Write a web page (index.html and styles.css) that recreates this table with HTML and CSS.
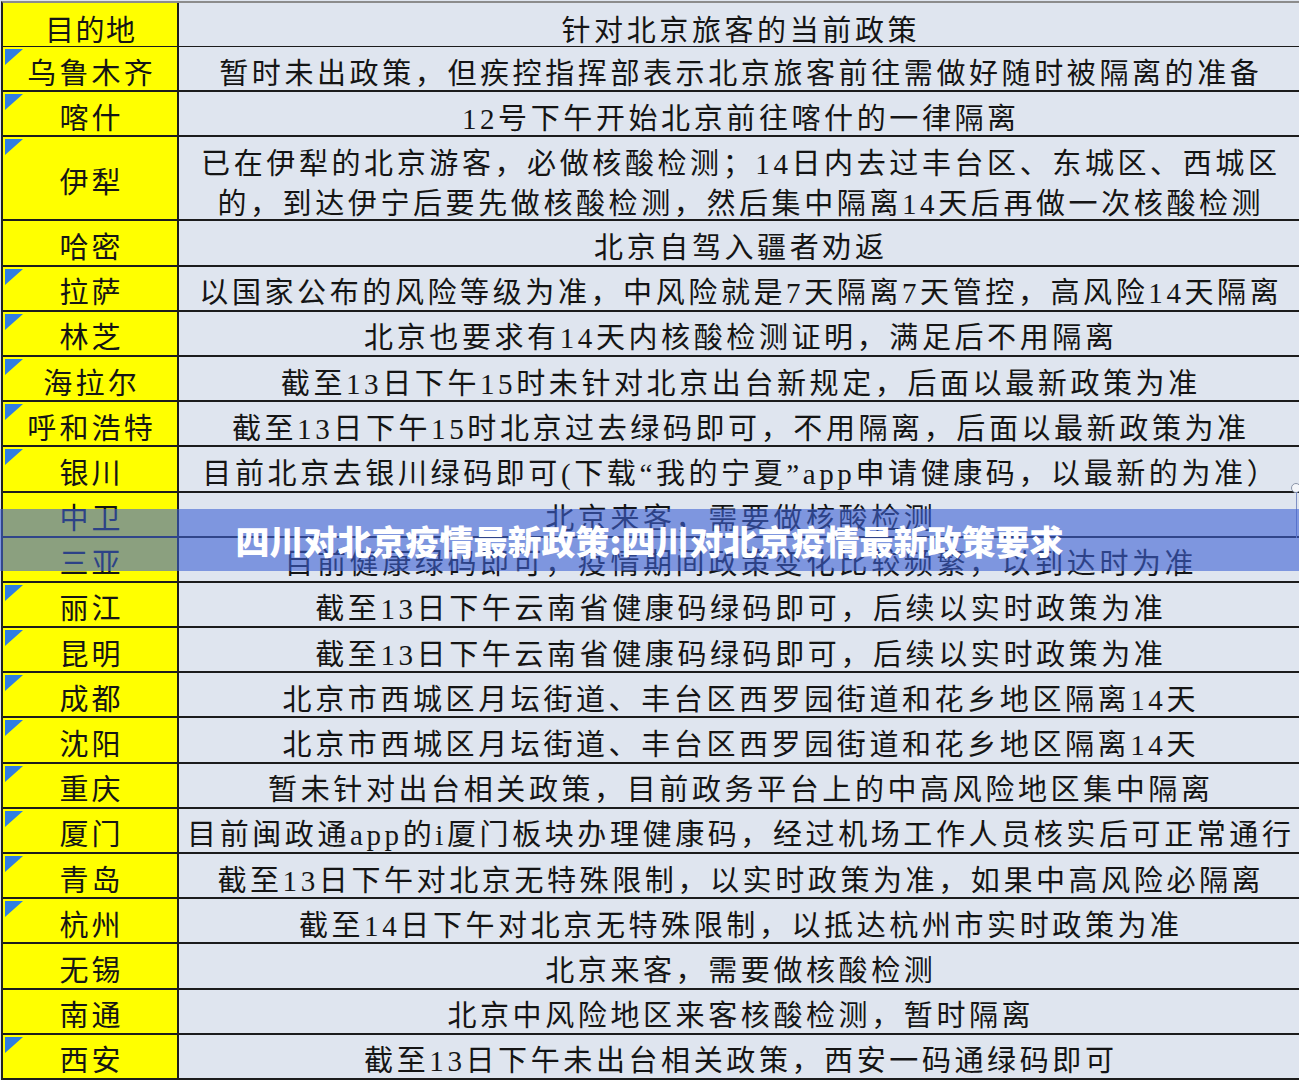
FILE: index.html
```html
<!DOCTYPE html>
<html lang="zh-CN">
<head>
<meta charset="utf-8">
<title>四川对北京疫情最新政策</title>
<link rel="stylesheet" href="styles.css">
</head>
<body>
<div class="sheet">
  <div class="table">
    <div class="row head"><div class="place"><span>目的地</span></div><div class="policy"><span>针对北京旅客的当前政策</span></div></div>
    <div class="row"><div class="place mark"><span>乌鲁木齐</span></div><div class="policy"><span>暂时未出政策，但疾控指挥部表示北京旅客前往需做好随时被隔离的准备</span></div></div>
    <div class="row"><div class="place mark"><span>喀什</span></div><div class="policy"><span>12号下午开始北京前往喀什的一律隔离</span></div></div>
    <div class="row tall"><div class="place mark"><span>伊犁</span></div><div class="policy"><span class="two">已在伊犁的北京游客，必做核酸检测；14日内去过丰台区、东城区、西城区<br>的，到达伊宁后要先做核酸检测，然后集中隔离14天后再做一次核酸检测</span></div></div>
    <div class="row"><div class="place"><span>哈密</span></div><div class="policy"><span>北京自驾入疆者劝返</span></div></div>
    <div class="row"><div class="place mark"><span>拉萨</span></div><div class="policy"><span>以国家公布的风险等级为准，中风险就是7天隔离7天管控，高风险14天隔离</span></div></div>
    <div class="row"><div class="place mark"><span>林芝</span></div><div class="policy"><span>北京也要求有14天内核酸检测证明，满足后不用隔离</span></div></div>
    <div class="row"><div class="place mark"><span>海拉尔</span></div><div class="policy"><span>截至13日下午15时未针对北京出台新规定，后面以最新政策为准</span></div></div>
    <div class="row"><div class="place mark"><span>呼和浩特</span></div><div class="policy"><span>截至13日下午15时北京过去绿码即可，不用隔离，后面以最新政策为准</span></div></div>
    <div class="row"><div class="place mark"><span>银川</span></div><div class="policy"><span>目前北京去银川绿码即可(下载“我的宁夏”app申请健康码，以最新的为准）</span></div></div>
    <div class="row"><div class="place"><span>中卫</span></div><div class="policy"><span>北京来客，需要做核酸检测</span></div></div>
    <div class="row"><div class="place"><span>三亚</span></div><div class="policy"><span>目前健康绿码即可，疫情期间政策变化比较频繁，以到达时为准</span></div></div>
    <div class="row"><div class="place mark"><span>丽江</span></div><div class="policy"><span>截至13日下午云南省健康码绿码即可，后续以实时政策为准</span></div></div>
    <div class="row"><div class="place mark"><span>昆明</span></div><div class="policy"><span>截至13日下午云南省健康码绿码即可，后续以实时政策为准</span></div></div>
    <div class="row"><div class="place mark"><span>成都</span></div><div class="policy"><span>北京市西城区月坛街道、丰台区西罗园街道和花乡地区隔离14天</span></div></div>
    <div class="row"><div class="place mark"><span>沈阳</span></div><div class="policy"><span>北京市西城区月坛街道、丰台区西罗园街道和花乡地区隔离14天</span></div></div>
    <div class="row"><div class="place mark"><span>重庆</span></div><div class="policy"><span>暂未针对出台相关政策，目前政务平台上的中高风险地区集中隔离</span></div></div>
    <div class="row"><div class="place mark"><span>厦门</span></div><div class="policy"><span>目前闽政通app的i厦门板块办理健康码，经过机场工作人员核实后可正常通行</span></div></div>
    <div class="row"><div class="place mark"><span>青岛</span></div><div class="policy"><span>截至13日下午对北京无特殊限制，以实时政策为准，如果中高风险必隔离</span></div></div>
    <div class="row"><div class="place mark"><span>杭州</span></div><div class="policy"><span>截至14日下午对北京无特殊限制，以抵达杭州市实时政策为准</span></div></div>
    <div class="row"><div class="place"><span>无锡</span></div><div class="policy"><span>北京来客，需要做核酸检测</span></div></div>
    <div class="row"><div class="place"><span>南通</span></div><div class="policy"><span>北京中风险地区来客核酸检测，暂时隔离</span></div></div>
    <div class="row"><div class="place mark"><span>西安</span></div><div class="policy"><span>截至13日下午未出台相关政策，西安一码通绿码即可</span></div></div>
  </div>
  <div class="handle"></div>
  <div class="handle-line"></div>
  <div class="banner"><h1>四川对北京疫情最新政策:四川对北京疫情最新政策要求</h1></div>
</div>
</body>
</html>
```

FILE: styles.css
```css
html, body {
  margin: 0;
  padding: 0;
  background: #dfe5ef;
}

body {
  font-family: "Liberation Serif", "Noto Sans CJK SC", serif;
  color: #151515;
  overflow: hidden;
}

.sheet {
  position: relative;
  width: 1299px;
  height: 1080px;
  padding-top: 1px;
  box-sizing: border-box;
}

.table {
  margin-left: 1px;
  border-top: 2px solid #8c8c8c;
  border-left: 2px solid #222;
}

.row {
  display: grid;
  grid-template-columns: 176px 1fr;
  height: 45.2px;
  box-sizing: border-box;
  border-bottom: 2px solid #1c1c1c;
}

.row.head {
  height: 44px;
}

.row.tall {
  height: 84px;
}

.place {
  position: relative;
  background: #ffff00;
  border-right: 2px solid #1c1c1c;
  display: flex;
  align-items: center;
  justify-content: center;
}

.policy {
  background: #dfe5ef;
  display: flex;
  align-items: center;
  justify-content: center;
  overflow: hidden;
}

.place span,
.policy span {
  font-size: 29px;
  line-height: 1;
  letter-spacing: 3.6px;
  padding-left: 3.6px;
  padding-top: 11px;
  white-space: nowrap;
  font-weight: 400;
}

.place span {
  letter-spacing: 3.2px;
  padding-left: 3.2px;
}

.head .place span {
  letter-spacing: 1.5px;
  padding-left: 1.5px;
}

.head .place span,
.head .policy span {
  padding-top: 14px;
}

.policy .two {
  line-height: 40px;
  text-align: center;
  padding-top: 12px;
}

.mark::before {
  content: "";
  position: absolute;
  left: 2px;
  top: 2px;
  width: 0;
  height: 0;
  border-top: 16px solid #2f7de2;
  border-right: 18px solid transparent;
}

.handle {
  position: absolute;
  left: 1291px;
  top: 483px;
  width: 8px;
  height: 8px;
  border-radius: 50%;
  background: #f4f6fa;
  border: 1px solid #8a94a8;
}

.handle-line {
  position: absolute;
  left: 1296px;
  top: 492px;
  width: 1px;
  height: 46px;
  background: #7f90c4;
}

.banner {
  position: absolute;
  left: 0;
  right: 0;
  top: 509px;
  height: 62px;
  background: rgba(62, 96, 212, 0.6);
  display: flex;
  align-items: center;
  justify-content: center;
}

.banner h1 {
  margin: 0;
  font-family: "Noto Sans CJK SC", "Noto Sans", sans-serif;
  font-weight: 900;
  font-size: 34px;
  line-height: 1;
  color: #ffffff;
  padding-top: 2px;
}
```
